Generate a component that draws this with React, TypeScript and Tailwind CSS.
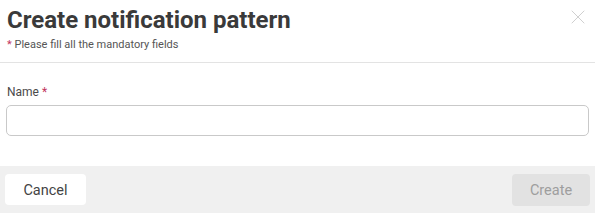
import { X } from "lucide-react";

export default function App() {
  return (
    <div className="w-[595px] h-[213px] bg-white flex flex-col font-['Roboto',sans-serif] overflow-hidden">
      {/* Header */}
      <div className="relative px-[7px] pt-[6px] pb-[10px] border-b border-[#e3e3e3]">
        <h1 className="text-[24px] leading-[28px] font-bold text-[#3a3a3a]">Create notification pattern</h1>
        <p className="mt-[4px] text-[11px] leading-[14px] text-[#555]">
          <span className="text-[#c2355d]">*</span> Please fill all the mandatory fields
        </p>
        <button className="absolute right-[5px] top-[5px] text-[#c4c4c4]">
          <X size={24} strokeWidth={0.8} />
        </button>
      </div>

      {/* Body */}
      <div className="flex-1 px-[6px] pt-[21px]">
        <label className="block pl-[1px] text-[12px] leading-[16px] text-[#4a4a4a]">
          Name <span className="text-[#c2355d]">*</span>
        </label>
        <input
          type="text"
          className="mt-[5px] w-full h-[31px] rounded-[5px] border border-[#c9c9c9] bg-white outline-none"
        />
      </div>

      {/* Footer */}
      <div className="h-[47px] bg-[#f0f0f0] flex items-center justify-between px-[5px]">
        <button className="w-[81px] h-[31px] pt-[2px] rounded-[4px] bg-white text-[14.5px] text-[#444]">Cancel</button>
        <button className="w-[78px] h-[32px] pt-[2px] rounded-[4px] bg-[#e2e2e2] text-[14.5px] text-[#9e9e9e]">Create</button>
      </div>
    </div>
  );
}
